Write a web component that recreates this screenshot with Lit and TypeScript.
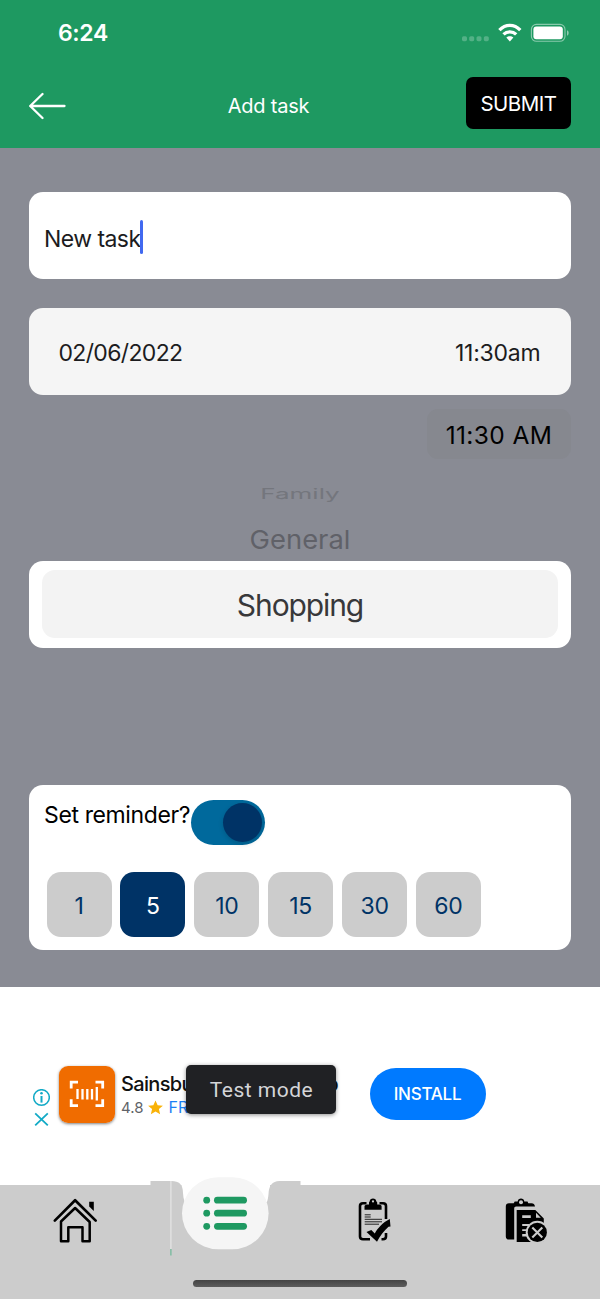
import { LitElement, html, css, svg } from "lit";
import { customElement, property, state } from "lit/decorators.js";
import { classMap } from "lit/directives/class-map.js";

@customElement("status-bar")
class StatusBar extends LitElement {
  static styles = css`
    :host { display: flex; justify-content: space-between; height: 66px; padding: 0 31px 0 58px; align-items: center; box-sizing: border-box; }
    .clock { font-size: 23px; font-weight: 600; letter-spacing: -0.35px; line-height: 28px; }
    .signals { display: block; }
  `;
  render() {
    return html`
      <span class="clock">6:24</span>
      <svg class="signals" width="108" height="20" viewBox="461 23 108 20">
        ${[462, 469.2, 476.5, 483.8].map((x) => svg`<rect x=${x} y="36.2" width="5" height="5" rx="1.6" fill="#fff" opacity=".24"/>`)}
        <g fill="none" stroke="#fff" stroke-width="3.3">
          <path d="M499.4 30.2C505.5 23.8 514.2 23.8 520.3 30.2"/>
          <path d="M503.5 34.4C507 31 512.7 31 516.2 34.4"/>
        </g>
        <path d="M506.3 37.6C508.3 35.8 511.4 35.8 513.4 37.6L509.85 41.4Z" fill="#fff"/>
        <rect x="531.4" y="24.4" width="33.6" height="16.9" rx="5" fill="none" stroke="#fff" stroke-width="1.1" opacity=".48"/>
        <rect x="533.4" y="26.6" width="29.4" height="12.6" rx="3" fill="#fff"/>
        <path d="M567 30.3C569.2 31.2 569.2 34.8 567 35.8Z" fill="#fff" opacity=".5"/>
      </svg>
    `;
  }
}

@customElement("task-form")
class TaskForm extends LitElement {
  @state() minutes = 5;

  static styles = css`
    :host { display: flex; flex-direction: column; height: 839px; padding: 43.5px 29px 0; box-sizing: border-box; background: #898b94; }
    .card { display: flex; align-items: center; height: 87px; box-sizing: border-box; border-radius: 14px; background: #fff; flex: none; }
    .name { padding: 8px 15px 0; font-size: 23px; letter-spacing: -0.55px; color: #1c1c1e; }
    .caret { width: 3px; height: 34px; border-radius: 2px; background: #4169f0; margin: -4px 0 0 -1px; }
    .when { justify-content: space-between; margin-top: 29px; padding: 3px 30.5px 0 29.5px; background: #f5f5f5; font-size: 23px; color: #1c1c1e; }
    .date { letter-spacing: -0.65px; }
    .time { letter-spacing: -0.22px; }
    .chip { align-self: flex-end; display: flex; align-items: center; justify-content: center; width: 144px; height: 50px; margin-top: 14.5px; padding-top: 1px; box-sizing: border-box; border-radius: 11px; background: #86888f; color: #000; font-size: 24.5px; letter-spacing: 0.4px; }
    .wheel { display: flex; flex-direction: column; align-items: center; }
    .far { height: 24px; margin-top: 23px; line-height: 24px; font-size: 26px; color: #74767d; transform: scaleY(0.56); }
    .near { height: 34px; margin-top: 17px; line-height: 34px; font-size: 27.4px; color: #606168; transform: scaleY(0.95); }
    .picker { margin-top: 3.5px; padding: 0 13px; }
    .selected { flex: 1; height: 68px; display: flex; align-items: center; justify-content: center; padding-top: 1px; box-sizing: border-box; border-radius: 13px; background: #f3f3f3; font-size: 30px; letter-spacing: -1.1px; color: #38383a; }
    .reminder { display: block; height: 165px; margin-top: 137.5px; padding: 14.5px 17.5px 0; }
    .row { display: flex; align-items: flex-start; height: 45px; }
    .label { width: 145px; margin-left: -2.5px; line-height: 30px; font-size: 23px; white-space: nowrap; letter-spacing: -0.38px; color: #000; }
    .toggle { display: flex; justify-content: flex-end; align-items: center; width: 74px; height: 45px; margin-left: 2px; padding-right: 3px; box-sizing: border-box; border-radius: 23px; background: #00699c; }
    .knob { width: 39px; height: 39px; border-radius: 50%; background: #003366; box-shadow: 0 2px 5px rgba(0, 0, 0, 0.15); }
    .choices { display: flex; gap: 8.9px; margin-top: 27.5px; }
    .choice { width: 65px; height: 65px; border: 0; padding: 3px 0 0; border-radius: 14px; background: #ccc; color: #003366; font: 23px Inter, sans-serif; letter-spacing: -0.3px; }
    .choice.on { background: #003366; color: #fff; }
  `;

  render() {
    return html`
      <div class="card name"><span>New task</span><i class="caret"></i></div>
      <div class="card when"><span class="date">02/06/2022</span><span class="time">11:30am</span></div>
      <div class="chip">11:30 AM</div>
      <div class="wheel">
        <div class="far">Family</div>
        <div class="near">General</div>
      </div>
      <div class="card picker"><div class="selected">Shopping</div></div>
      <div class="card reminder">
        <div class="row"><span class="label">Set reminder?</span><span class="toggle"><i class="knob"></i></span></div>
        <div class="choices">
          ${[1, 5, 10, 15, 30, 60].map((n) => html`
            <button class=${classMap({ choice: true, on: n === this.minutes })} @click=${() => (this.minutes = n)}>${n}</button>`)}
        </div>
      </div>
    `;
  }
}

@customElement("ad-banner")
class AdBanner extends LitElement {
  static styles = css`
    :host { display: flex; align-items: flex-start; position: relative; height: 197.5px; padding: 79px 0 0 33px; box-sizing: border-box; background: #fff; }
    .marks { display: block; margin-top: 23px; }
    .logo { margin: 0 0 0 9px; border-radius: 9px; box-shadow: 0 1px 3px rgba(0, 0, 0, 0.5); flex: none; }
    .info { width: 217px; margin-left: 6px; padding-top: 6px; }
    .title { display: flex; justify-content: space-between; font-size: 20px; font-weight: 500; line-height: 25px; letter-spacing: -0.65px; color: #111; white-space: nowrap; }
    .meta { display: flex; align-items: center; line-height: 21px; font-size: 15px; color: #5f6368; }
    .star { margin: 0 5px 0 5px; }
    .price { color: #1a80f5; font-size: 16px; }
    .install { width: 116px; height: 52px; margin: 2px 0 0 31.500px; padding: 0; border: 0; border-radius: 26px; background: #007aff; color: #fff; font: 500 17px Inter, sans-serif; letter-spacing: -0.25px; }
    .toast { position: absolute; left: 186px; top: 78px; width: 150px; height: 49px; display: flex; align-items: center; justify-content: center; padding-left: 1px; box-sizing: border-box; border-radius: 5px; background: #202124; box-shadow: 0 1px 4px rgba(0, 0, 0, 0.45); color: #d4d5d8; font: 21px Roboto, sans-serif; letter-spacing: 0.5px; }
  `;
  render() {
    return html`
      <svg class="marks" width="17" height="39" viewBox="33 1089 17 39">
        <g fill="none" stroke="#12aac6" stroke-width="1.5">
          <circle cx="41.5" cy="1097.5" r="7.8"/>
          <path d="M41.5 1096V1102.6" stroke-width="2"/>
          <path d="M35.2 1113.4L47.8 1125.4M47.8 1113.4L35.2 1125.4" stroke-width="1.8"/>
        </g>
        <circle cx="41.5" cy="1093.3" r="1.3" fill="#12aac6"/>
      </svg>
      <svg class="logo" width="56" height="57" viewBox="59 1066 56 57">
        <rect x="59" y="1066" width="56" height="57" fill="#f06c00"/>
        <g fill="none" stroke="#fff" stroke-width="2.8">
          <path d="M78 1082.2H71.2V1088.6M95.5 1082.2H102.7V1088.6M71.2 1099.2V1105.7H78M102.7 1099.2V1105.7H95.5"/>
          <path d="M77.5 1089V1099M82.500 1089V1099.5M87.3 1089V1099.5M92 1089V1099.5M96.8 1087V1100.5" stroke-width="2.3"/>
        </g>
      </svg>
      <div class="info">
        <div class="title"><span>Sainsbury's</span><span>SmartShop</span></div>
        <div class="meta">
          <span>4.8</span>
          <svg class="star" width="15" height="15" viewBox="0 0 14 14"><path d="M7 .4L9 4.9L13.9 5.300L10.200 8.500L11.300 13.400L7 10.800L2.700 13.400L3.800 8.500L.1 5.300L5 4.900Z" fill="#f9b208"/></svg>
          <span class="price">FREE</span>
        </div>
      </div>
      <button class="install">INSTALL</button>
      <div class="toast">Test mode</div>
    `;
  }
}

@customElement("tab-bar")
class TabBar extends LitElement {
  static styles = css`
    :host { display: flex; flex-direction: column; align-items: center; height: 114.5px; background: #ccc; }
    .tabs { display: grid; grid-template-columns: repeat(4, 150px); height: 95.5px; }
    .tab { position: relative; display: block; }
    .icon { display: block; overflow: visible; }
    .home { width: 214px; height: 7px; border-radius: 4px; background: linear-gradient(#444, #5c5c5c); }
  `;
  render() {
    return html`
      <div class="tabs">
        <span class="tab"><svg class="icon" width="150" height="95.5" viewBox="0 1185 150 95.5">
          <g fill="none" stroke="#000" stroke-linejoin="round" stroke-linecap="round">
            <path d="M54.8 1220.6L75.1 1200.2L95.7 1220.6" stroke-width="2.7"/>
            <path d="M61 1221.5L75.1 1208L89.7 1222V1241.2H82.5V1227.3H68.3V1241.2H61Z" stroke-width="2.5"/>
          </g>
          <path d="M89.2 1201.8H93.8V1211L89.2 1206.5Z"/>
        </svg></span>
        <span class="tab"><svg class="icon" width="150" height="95.5" viewBox="150 1185 150 95.5">
          <path d="M181.5 1181H270V1202H181.5Z" fill="#fff"/>
          <path d="M150.5 1190V1181.1H171.5C179 1181.1 183 1184.5 183 1193C183.2 1199 185 1204 188 1208H150.5Z" fill="#ccc"/>
          <path d="M300.5 1190V1181.1H279.5C272 1181.1 269 1186 268.5 1194C268 1201 266 1205 264 1208H300.5Z" fill="#ccc"/>
          <rect x="170.3" y="1181" width="1.2" height="68" fill="#e5e5e5"/>
          <rect x="170.3" y="1249" width="1.2" height="6.5" fill="#6db897"/>
          <rect x="182" y="1177.2" width="86.6" height="72" rx="36" fill="#f5f5f5"/>
          <g fill="#1e9961">
            ${[1200.2, 1213.2, 1226.3].map((y) => svg`<circle cx="206.7" cy=${y} r="3.4"/><rect x="214" y=${y - 3.4} width="33" height="6.8" rx="3.4"/>`)}
          </g>
        </svg></span>
        <span class="tab"><svg class="icon" width="150" height="95.5" viewBox="300 1185 150 95.5">
          <path d="M366.5 1203.2H363C361 1203.2 360 1204.2 360 1206V1236.5C360 1238.5 361 1239.2 363 1239.2H370M379.5 1203.2H383C385 1203.2 386 1204.2 386 1206V1219M386 1233V1236.5C386 1238.5 385 1239.2 383 1239.2H381.5" fill="none" stroke="#000" stroke-width="2.6"/>
          <path d="M364.5 1209.7V1206.2C364.5 1205 366 1204.5 369 1204.5V1203C369 1202 369.400 1201.600 369.800 1201.600C369.200 1197.600 376.800 1197.600 376.200 1201.600C376.800 1201.600 377.200 1202 377.200 1203V1204.5C380.5 1204.5 381.6 1205 381.6 1206.2V1209.7Z"/>
          <circle cx="373" cy="1201.4" r="1.1" fill="#ccc"/>
          <path d="M364.7 1214.8H370.7M364.7 1217H370.7M364.7 1219.3H382M364.7 1221.8H382M364.7 1224.2H379" stroke="#222" stroke-width="1"/>
          <path d="M366.5 1232L371.3 1230L374.8 1233.5C377.5 1228.5 382.5 1222.5 389.8 1219L390.5 1226.5L388.5 1226.7C384 1231 380 1235.5 377 1241.7Z"/>
        </svg></span>
        <span class="tab"><svg class="icon" width="150" height="95.5" viewBox="450 1185 150 95.5">
          <path d="M505.8 1236.5V1206.5C505.8 1204.3 507 1203.3 509 1203.3H513.7L514.7 1201.4H517.7C518 1197.7 524 1197.7 524.3 1201.4H527.5L528.3 1203.3H531.5C533.5 1203.3 534.6 1204.5 535 1206.5H516.2C514.8 1206.5 514.2 1207.2 514.2 1208.5V1239.6H509C507 1239.6 505.8 1238.5 505.8 1236.5Z"/>
          <circle cx="521" cy="1202.3" r="2" fill="#ccc"/>
          <path d="M516.7 1209.9H535.3L543.8 1218.5V1242H516.7Z"/>
          <path d="M522.2 1215.3H530.8V1218H522.2ZM536 1212.8V1217.7H540.8ZM522.2 1224H529V1226H522.2ZM522.2 1229.2H528V1231H522.2ZM522.2 1234H528V1236.5H522.2Z" fill="#ccc"/>
          <circle cx="537.3" cy="1232.4" r="11.6" fill="#ccc"/>
          <circle cx="537.3" cy="1232.4" r="9.6"/>
          <path d="M532.3 1227.4L542.3 1237.4M542.3 1227.4L532.3 1237.4" stroke="#ccc" stroke-width="2.1"/>
        </svg></span>
      </div>
      <div class="home"></div>
    `;
  }
}

@customElement("app-root")
class AppRoot extends LitElement {
  @property() heading = "Add task";

  static styles = css`
    :host { display: flex; flex-direction: column; width: 600px; height: 1299px; overflow: hidden; font-family: Inter, "Liberation Sans", sans-serif; background: #fff; }
    .header { height: 148px; background: #1e9961; color: #fff; flex: none; }
    .bar { display: grid; grid-template-columns: 105px 1fr 105px; align-items: start; padding: 11px 29px 0; }
    .back { display: block; margin-top: 15px; }
    .heading { margin: 17px 63px 0 0; justify-self: center; font-size: 20px; line-height: 24px; letter-spacing: -0.2px; }
    .submit { height: 52px; padding: 0; border: 0; border-radius: 7px; background: #000; color: #fff; font: 20.5px Inter, sans-serif; letter-spacing: -0.5px; }
  `;
  render() {
    return html`
      <div class="header">
        <status-bar></status-bar>
        <div class="bar">
          <svg class="back" width="38" height="28" viewBox="29 92 38 28">
            <path d="M42.5 94L30.2 106L42.5 118M30.5 106H64.5" fill="none" stroke="#fff" stroke-width="2.3" stroke-linecap="round" stroke-linejoin="round"/>
          </svg>
          <span class="heading">${this.heading}</span>
          <button class="submit">SUBMIT</button>
        </div>
      </div>
      <task-form></task-form>
      <ad-banner></ad-banner>
      <tab-bar></tab-bar>
    `;
  }
}
